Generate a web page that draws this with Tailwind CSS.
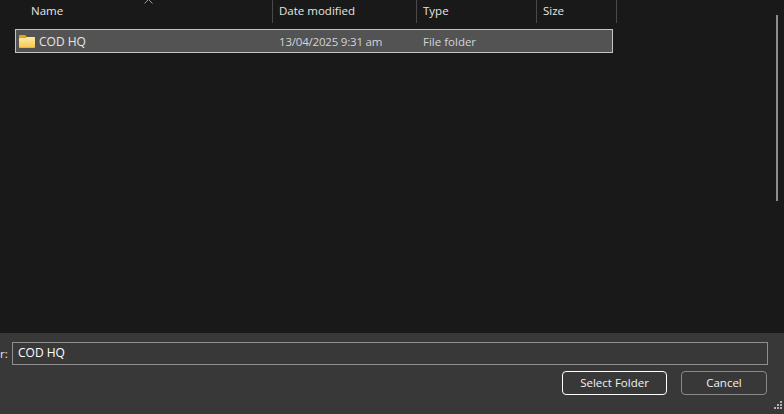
<!DOCTYPE html>
<html lang="en">
  <head>
    <meta charset="UTF-8" />
    <script src="https://cdn.jsdelivr.net/npm/@tailwindcss/browser@4"></script>
    <title>Select Folder</title>
  </head>
  <body class="bg-[#191919]">
    <main class="flex h-[414px] w-[784px] flex-col overflow-hidden font-['Open_Sans',sans-serif] text-[11.5px] text-[#e6e6e6]">
      <div class="relative h-[333px] pl-[15px]">
        <!-- column headers -->
        <div class="relative flex h-[23px] w-[602px] items-start">
          <div class="h-[23px] w-[258px] border-r border-[#4a4a4a] pl-[16px] pt-[3px] leading-[16px]">Name</div>
          <div class="h-[23px] w-[144px] border-r border-[#4a4a4a] pl-[6px] pt-[3px] leading-[16px]">Date modified</div>
          <div class="h-[23px] w-[120px] border-r border-[#4a4a4a] pl-[6px] pt-[3px] leading-[16px]">Type</div>
          <div class="h-[23px] w-[80px] border-r border-[#4a4a4a] pl-[6px] pt-[3px] leading-[16px]">Size</div>
          <svg class="absolute left-[129px] top-0" width="9" height="4" viewBox="0 0 9 4" fill="none" stroke="#9a9a9a"><path d="M0.5 3.5L4.5 -0.5L8.5 3.5" /></svg>
        </div>
        <!-- selected row -->
        <div class="mt-[6px] flex h-[24px] w-[598px] items-center border border-[#c4c4c4] bg-[#535353]">
          <svg class="ml-[3px]" width="16" height="13" viewBox="0 0 16 13">
            <defs>
              <linearGradient id="front" x1="0" y1="0" x2="0" y2="1">
                <stop offset="0" stop-color="#fde9a4" />
                <stop offset="1" stop-color="#f9c94e" />
              </linearGradient>
            </defs>
            <path d="M0 1a1 1 0 0 1 1-1h5l2 2h7a1 1 0 0 1 1 1v9a1 1 0 0 1-1 1H1a1 1 0 0 1-1-1z" fill="#e8a317" />
            <path d="M0 4a1 1 0 0 1 1-1h6l1-1h7a1 1 0 0 1 1 1v8.500a1 1 0 0 1-1 1H1a1 1 0 0 1-1-1z" fill="url(#front)" />
          </svg>
          <span class="ml-[4px] mt-[2px] w-[240px] text-[12px] leading-[16px]">COD HQ</span>
          <span class="mt-[2px] w-[144px] tracking-[-0.2px] text-[#d4d4d4]">13/04/2025 9:31 am</span>
          <span class="mt-[2px] text-[#d4d4d4]">File folder</span>
        </div>
        <!-- scrollbar -->
        <div class="absolute left-[776px] top-[15px] h-[186px] w-[2px] bg-[#8c8c8c]"></div>
      </div>
      <!-- bottom panel -->
      <div class="relative flex h-[81px] flex-col bg-[#383838] pr-[16px]">
        <div class="mt-[9px] flex h-[23px] items-center">
          <span class="w-[12px] text-right leading-[16px]"><span class="pr-[5px]">r:</span></span>
          <div class="flex h-[23px] flex-1 items-center border border-[#8f8f8f] pb-[2px] pl-[5px] text-[12px] text-white">COD HQ</div>
        </div>
        <div class="mt-[6px] flex justify-end gap-[14px] pr-[1px]">
          <button class="h-[24px] w-[105px] rounded-[4px] border border-white pb-[1px] text-[#f2f2f2]">Select Folder</button>
          <button class="h-[24px] w-[86px] rounded-[4px] border border-[#8a8a8a] pb-[1px] text-[#f2f2f2]">Cancel</button>
        </div>
        <!-- resize grip -->
        <svg class="absolute bottom-[3px] right-[1px]" width="10" height="10" viewBox="0 0 10 10" fill="#b0b0b0">
          <rect x="7" y="0" width="2" height="2" /><rect x="4" y="3" width="2" height="2" /><rect x="7" y="3" width="2" height="2" />
          <rect x="1" y="6" width="2" height="2" /><rect x="4" y="6" width="2" height="2" /><rect x="7" y="6" width="2" height="2" />
        </svg>
      </div>
    </main>
  </body>
</html>
